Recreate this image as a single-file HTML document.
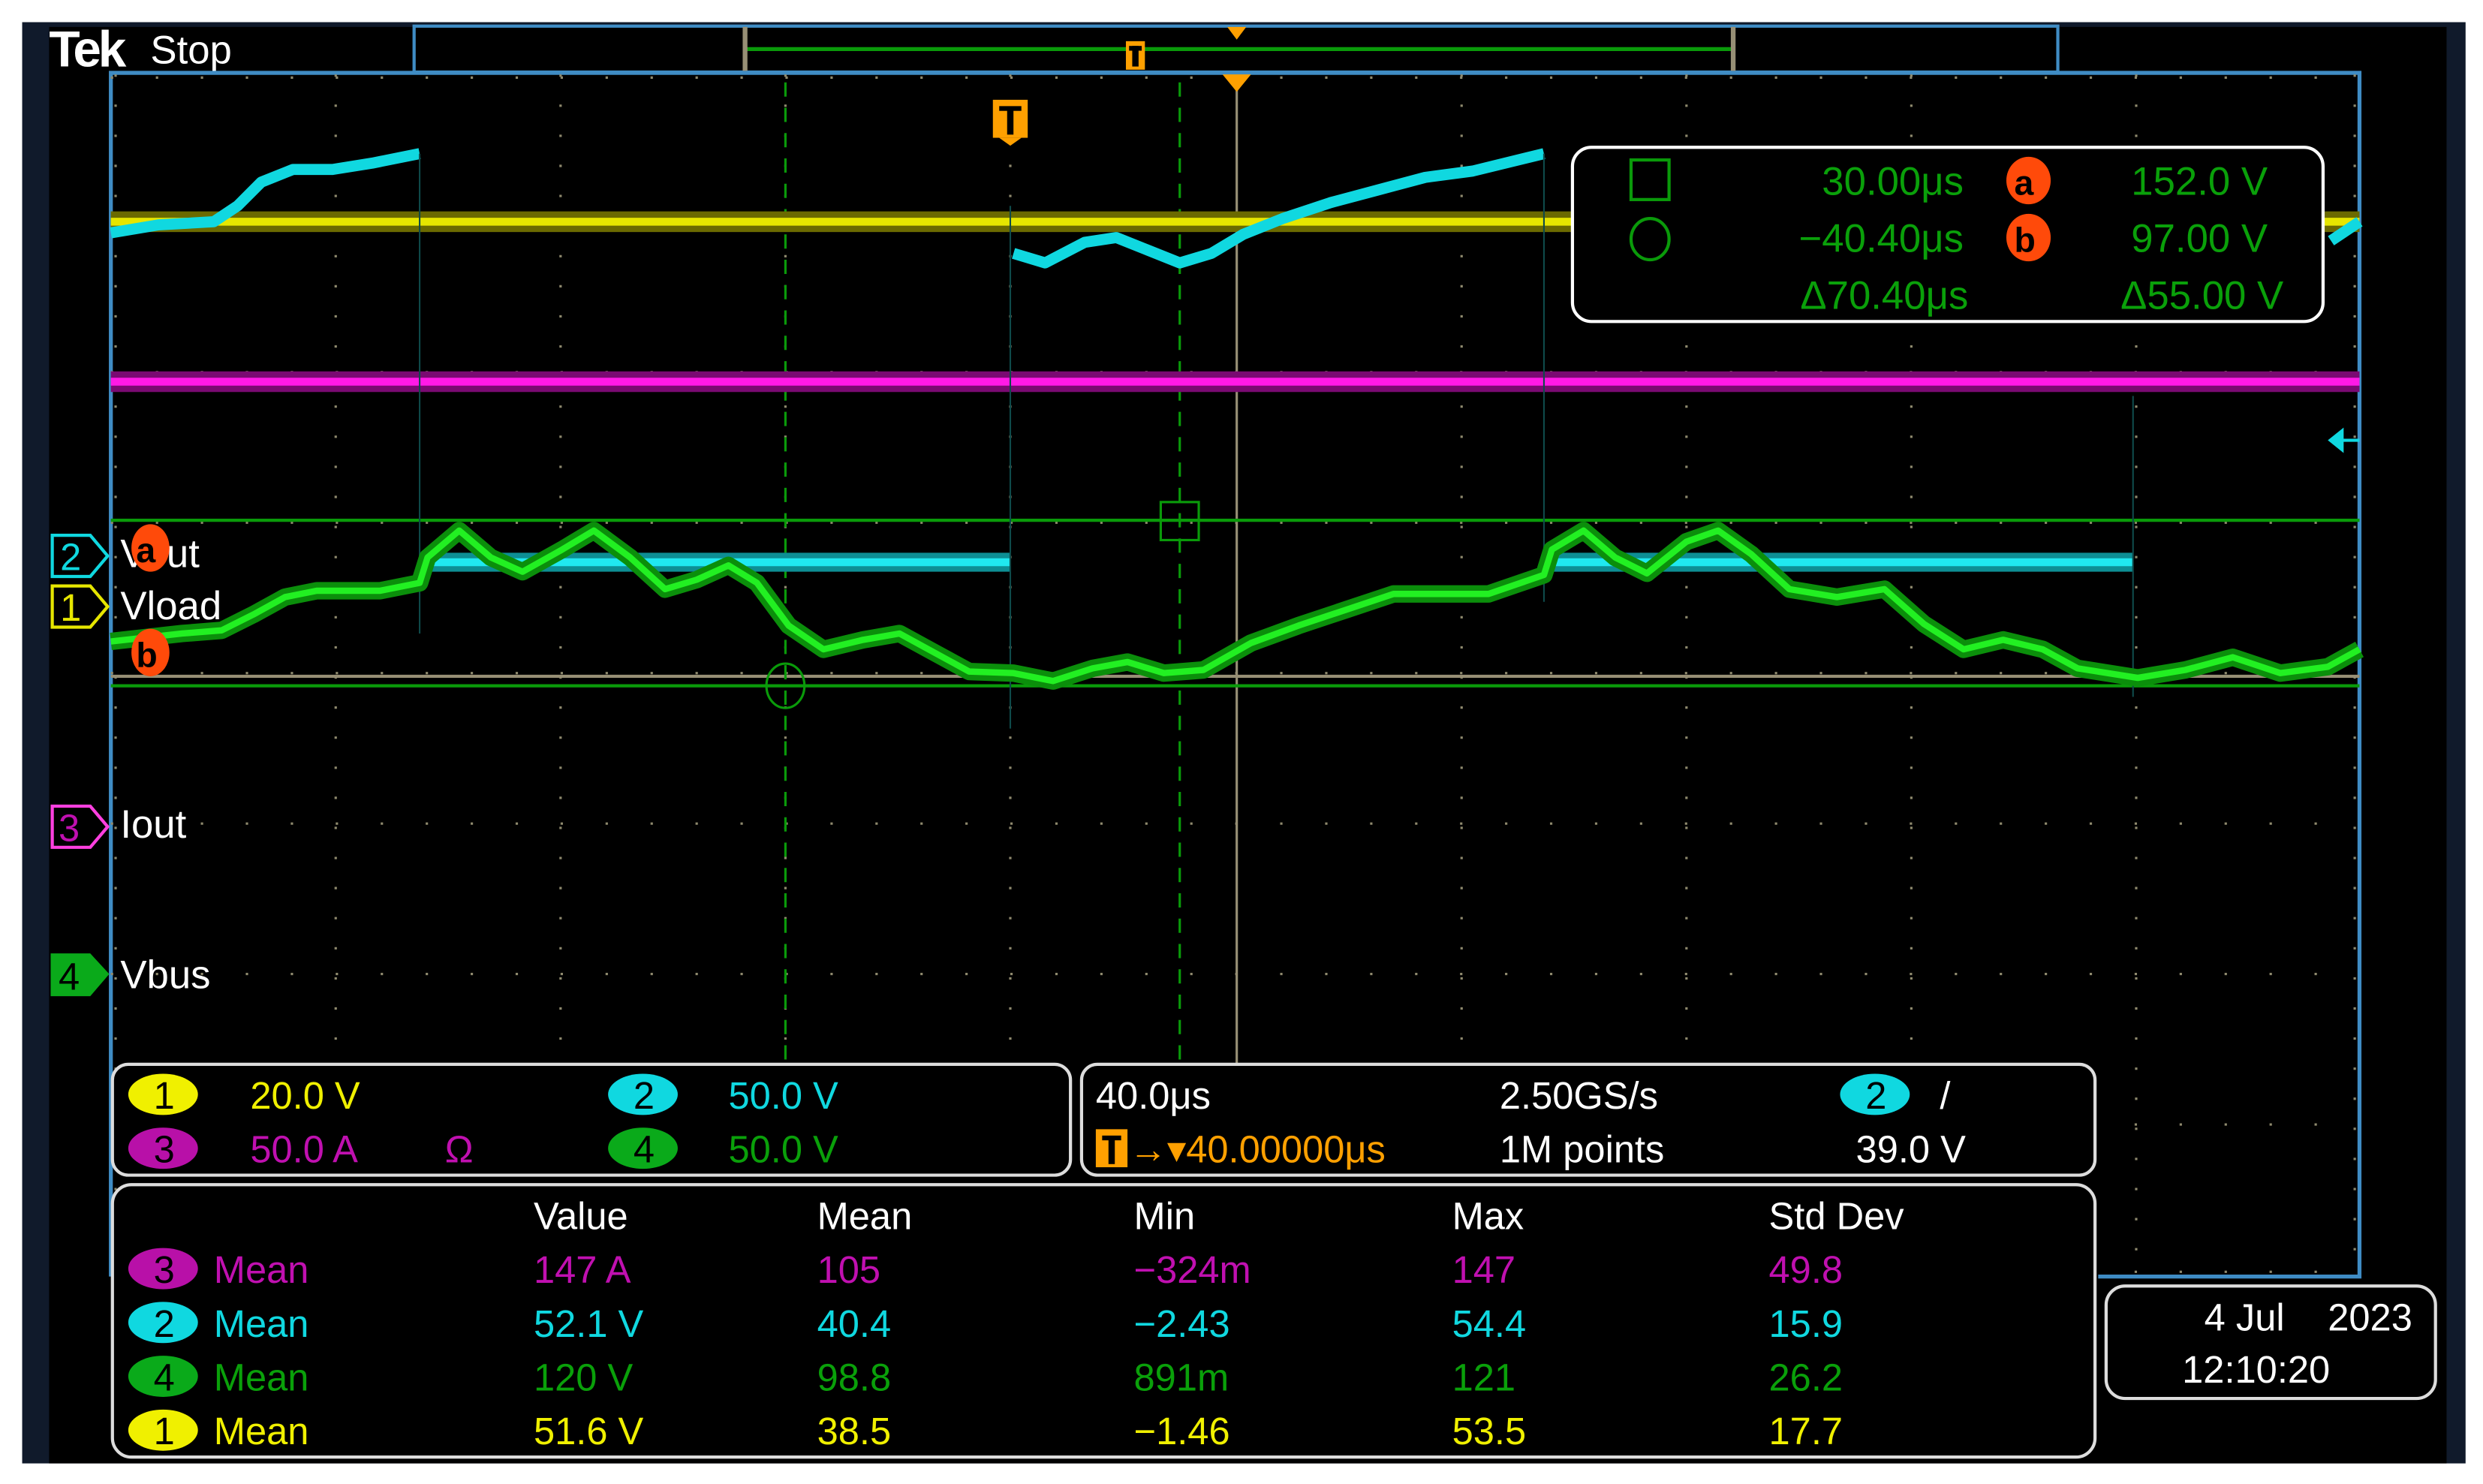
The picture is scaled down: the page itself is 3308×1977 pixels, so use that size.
<!DOCTYPE html>
<html><head><meta charset="utf-8"><style>
html,body{margin:0;padding:0;background:#fff;width:3308px;height:1977px;overflow:hidden}
svg{display:block}
text{font-family:"Liberation Sans Narrow","Liberation Sans",sans-serif}
</style></head><body>
<svg width="3308" height="1977" viewBox="0 0 1568 937" preserveAspectRatio="none" xmlns="http://www.w3.org/2000/svg">
<rect x="0" y="0" width="1568" height="937" fill="#fff"/>
<rect x="14" y="14" width="1543" height="910" fill="#101a2b"/>
<rect x="31" y="17" width="1514" height="907" fill="#000"/>
<!-- top bar -->
<text x="31" y="42" font-size="32" font-weight="bold" fill="#fff" font-family="Liberation Serif,serif" letter-spacing="-2">Tek</text>
<text x="95" y="40" font-size="25" fill="#fff">Stop</text>
<rect x="261.5" y="16.5" width="1038" height="29" fill="none" stroke="#3f8cc4" stroke-width="2"/>
<line x1="470" y1="31" x2="1094" y2="31" stroke="#0a9a0a" stroke-width="2.5"/>
<rect x="469" y="17" width="3" height="28" fill="#978f75"/>
<rect x="1093" y="17" width="3" height="28" fill="#978f75"/>
<rect x="711" y="26" width="12" height="18" fill="#ffa000"/><rect x="715" y="29" width="4" height="13" fill="#000"/><rect x="713" y="29" width="8" height="3" fill="#000"/>
<polygon points="775,17 787,17 781,25" fill="#ffa000"/>
<!-- graticule frame -->
<polyline points="70,806 70,46 1490,46 1490,806 1325,806" fill="none" stroke="#3f8cc4" stroke-width="2.5"/>
<!-- grid dots -->
<g stroke="#8f8a6e" stroke-width="1.5">
<g stroke-dasharray="1.5 17.5">
<line x1="212" y1="47" x2="212" y2="806"/><line x1="354" y1="47" x2="354" y2="806"/><line x1="496" y1="47" x2="496" y2="806"/><line x1="638" y1="47" x2="638" y2="806"/><line x1="923" y1="47" x2="923" y2="806"/><line x1="1065" y1="47" x2="1065" y2="806"/><line x1="1207" y1="47" x2="1207" y2="806"/><line x1="1349" y1="47" x2="1349" y2="806"/><line x1="73" y1="47" x2="73" y2="806"/><line x1="1487" y1="47" x2="1487" y2="806"/>
</g>
<g stroke-dasharray="1.5 26.9">
<line x1="70" y1="49" x2="1490" y2="49"/><line x1="70" y1="140" x2="1490" y2="140"/><line x1="70" y1="235" x2="1490" y2="235"/><line x1="70" y1="330" x2="1490" y2="330"/><line x1="70" y1="425" x2="1490" y2="425"/><line x1="70" y1="520" x2="1490" y2="520"/><line x1="70" y1="615" x2="1490" y2="615"/><line x1="70" y1="710" x2="1490" y2="710"/><line x1="70" y1="803" x2="1490" y2="803"/>
</g>
</g>
<line x1="70" y1="427" x2="1490" y2="427" stroke="#978f75" stroke-width="2"/>
<line x1="781" y1="52" x2="781" y2="672" stroke="#978f75" stroke-width="1.5"/>
<polygon points="772,47 790,47 781,58" fill="#ffa000"/>
<!-- cursors -->
<line x1="496" y1="52" x2="496" y2="670" stroke="#0a9a0a" stroke-width="1.5" stroke-dasharray="9 7"/>
<line x1="745" y1="52" x2="745" y2="670" stroke="#0a9a0a" stroke-width="1.5" stroke-dasharray="9 7"/>
<line x1="70" y1="328.5" x2="1490" y2="328.5" stroke="#0a9a0a" stroke-width="2"/>
<line x1="70" y1="433" x2="1490" y2="433" stroke="#0a9a0a" stroke-width="2"/>
<rect x="733" y="317" width="24" height="24" fill="none" stroke="#0a9a0a" stroke-width="1.5"/>
<ellipse cx="496" cy="433" rx="12" ry="14" fill="none" stroke="#0a9a0a" stroke-width="1.5"/>
<!-- T marker -->
<rect x="627" y="63" width="22" height="24" fill="#ffa000"/><polygon points="631,87 645,87 638,92" fill="#ffa000"/>
<rect x="631" y="67" width="14" height="3" fill="#000"/><rect x="636" y="69" width="4" height="16" fill="#000"/>
<!-- traces -->
<line x1="70" y1="140" x2="1490" y2="140" stroke="#6b6a00" stroke-width="13"/>
<line x1="70" y1="140" x2="1490" y2="140" stroke="#e6e600" stroke-width="5"/>
<line x1="70" y1="241" x2="1490" y2="241" stroke="#7a0a72" stroke-width="13"/>
<line x1="70" y1="241" x2="1490" y2="241" stroke="#ff1ae6" stroke-width="5"/>
<g fill="none" stroke="#10d8e0" stroke-width="7" stroke-linejoin="round">
<polyline points="70,147 100,142 135,140 150,130 165,115 185,107 210,107 235,103 265,97"/>
<polyline points="640,160 660,166 685,153 705,150 725,158 745,166 765,160 785,148 810,138 840,128 870,120 900,112 930,108 975,97"/>
<polyline points="1472,152 1490,140"/>
</g>
<g stroke="#0d8e94" stroke-width="12"><line x1="268" y1="355" x2="638" y2="355"/><line x1="975" y1="355" x2="1347" y2="355"/></g>
<g stroke="#20e8f0" stroke-width="5"><line x1="268" y1="355" x2="638" y2="355"/><line x1="975" y1="355" x2="1347" y2="355"/></g>
<g stroke="#0e4a4a" stroke-width="1"><line x1="265" y1="97" x2="265" y2="400"/><line x1="638" y1="130" x2="638" y2="460"/><line x1="975" y1="97" x2="975" y2="380"/><line x1="1347" y1="250" x2="1347" y2="440"/></g>
<polyline fill="none" stroke="#0b8e0b" stroke-width="11" stroke-linejoin="round" points="70,405 115,400 140,398 160,388 180,377 200,373 240,373 265,368 270,352 290,335 310,352 330,361 355,347 375,335 398,352 420,372 440,366 460,357 478,368 498,395 520,410 545,404 568,400 590,412 612,424 640,425 665,430 690,422 712,418 735,425 760,423 790,406 820,395 850,385 880,375 940,375 975,363 980,347 1000,335 1020,352 1040,362 1065,342 1085,335 1106,350 1130,372 1160,377 1190,372 1215,394 1240,410 1265,404 1290,410 1312,422 1350,428 1380,423 1410,415 1440,425 1470,421 1490,410"/>
<polyline fill="none" stroke="#22f022" stroke-width="4" stroke-linejoin="round" points="70,405 115,400 140,398 160,388 180,377 200,373 240,373 265,368 270,352 290,335 310,352 330,361 355,347 375,335 398,352 420,372 440,366 460,357 478,368 498,395 520,410 545,404 568,400 590,412 612,424 640,425 665,430 690,422 712,418 735,425 760,423 790,406 820,395 850,385 880,375 940,375 975,363 980,347 1000,335 1020,352 1040,362 1065,342 1085,335 1106,350 1130,372 1160,377 1190,372 1215,394 1240,410 1265,404 1290,410 1312,422 1350,428 1380,423 1410,415 1440,425 1470,421 1490,410"/>
<polygon points="1470,278 1480,270 1480,286" fill="#10d8e0"/><line x1="1478" y1="278" x2="1490" y2="278" stroke="#10d8e0" stroke-width="2"/>
<!-- channel labels -->
<g stroke-width="2" fill="none">
<polygon points="33,338 57,338 68,351 57,364 33,364" stroke="#10d8e0"/>
<polygon points="33,370 57,370 68,383 57,396 33,396" stroke="#e6e600"/>
<polygon points="33,509 57,509 68,522 57,535 33,535" stroke="#ff40e0"/>
</g>
<polygon points="32,602 57,602 69,615 57,629 32,629" fill="#0aaa1a"/>
<g font-size="24" fill="#10d8e0"><text x="38" y="360">2</text></g>
<g font-size="24" fill="#e6e600"><text x="38" y="392">1</text></g>
<g font-size="24" fill="#c010b0"><text x="37" y="531">3</text></g>
<g font-size="24" fill="#000"><text x="37" y="625">4</text></g>
<g font-size="25" fill="#fff"><text x="76" y="358">Vout</text><text x="76" y="391">Vload</text><text x="76" y="529">Iout</text><text x="76" y="624">Vbus</text></g>
<ellipse cx="95" cy="346" rx="12" ry="15" fill="#ff4a0a"/><text x="86" y="355" font-size="22" fill="#000" font-weight="bold">a</text>
<ellipse cx="95" cy="412" rx="12" ry="15" fill="#ff4a0a"/><text x="86" y="421" font-size="22" fill="#000" font-weight="bold">b</text>
<!-- cursor readout -->
<rect x="993" y="93" width="474" height="110" rx="12" fill="#000" stroke="#fff" stroke-width="2"/>
<rect x="1030" y="101" width="24" height="25" fill="none" stroke="#0a9a0a" stroke-width="2"/>
<ellipse cx="1042" cy="151" rx="12" ry="13" fill="none" stroke="#0a9a0a" stroke-width="2"/>
<g font-size="25" fill="#0aa00a" text-anchor="end"><text x="1240" y="123">30.00μs</text><text x="1240" y="159">−40.40μs</text><text x="1243" y="195">Δ70.40μs</text><text x="1432" y="123">152.0 V</text><text x="1432" y="159">97.00 V</text><text x="1442" y="195">Δ55.00 V</text></g>
<ellipse cx="1281" cy="114" rx="14" ry="15" fill="#ff4a0a"/><text x="1272" y="123" font-size="22" fill="#000" font-weight="bold">a</text>
<ellipse cx="1281" cy="150" rx="14" ry="15" fill="#ff4a0a"/><text x="1272" y="159" font-size="22" fill="#000" font-weight="bold">b</text>
<!-- bottom boxes -->
<g fill="#000" stroke="#ddd" stroke-width="2">
<rect x="71" y="672" width="605" height="70" rx="10"/>
<rect x="683" y="672" width="640" height="70" rx="10"/>
<rect x="71" y="748" width="1252" height="172" rx="12"/>
<rect x="1330" y="812" width="208" height="71" rx="12"/>
</g>
<g font-size="24">
<ellipse cx="103" cy="691" rx="22" ry="13" fill="#f0f000"/><text x="97" y="700" fill="#000">1</text>
<ellipse cx="103" cy="725" rx="22" ry="13" fill="#b810a8"/><text x="97" y="734" fill="#000">3</text>
<ellipse cx="406" cy="691" rx="22" ry="13" fill="#10d8e0"/><text x="400" y="700" fill="#000">2</text>
<ellipse cx="406" cy="725" rx="22" ry="13" fill="#0aaa1a"/><text x="400" y="734" fill="#000">4</text>
<text x="158" y="700" fill="#f0f000">20.0 V</text>
<text x="158" y="734" fill="#c010b0">50.0 A</text><text x="281" y="734" fill="#c010b0">Ω</text>
<text x="460" y="700" fill="#10d8e0">50.0 V</text>
<text x="460" y="734" fill="#0aa00a">50.0 V</text>
<text x="692" y="700" fill="#fff">40.0μs</text>
<text x="947" y="700" fill="#fff">2.50GS/s</text>
<ellipse cx="1184" cy="691" rx="22" ry="13" fill="#10d8e0"/><text x="1178" y="700" fill="#000">2</text>
<text x="1225" y="700" fill="#fff">/</text>
<rect x="692" y="713" width="20" height="24" fill="#ffa000"/><rect x="696" y="717" width="12" height="3" fill="#000"/><rect x="700" y="719" width="4" height="16" fill="#000"/>
<text x="713" y="734" fill="#ffa000">→▾40.00000μs</text>
<text x="947" y="734" fill="#fff">1M points</text>
<text x="1172" y="734" fill="#fff">39.0 V</text>
</g>
<g font-size="24" fill="#fff"><text x="337" y="776">Value</text><text x="516" y="776">Mean</text><text x="716" y="776">Min</text><text x="917" y="776">Max</text><text x="1117" y="776">Std Dev</text></g>
<g font-size="24">
<ellipse cx="103" cy="801" rx="22" ry="13" fill="#b810a8"/><text x="97" y="810" fill="#000">3</text>
<ellipse cx="103" cy="835" rx="22" ry="13" fill="#10d8e0"/><text x="97" y="844" fill="#000">2</text>
<ellipse cx="103" cy="869" rx="22" ry="13" fill="#0aaa1a"/><text x="97" y="878" fill="#000">4</text>
<ellipse cx="103" cy="903" rx="22" ry="13" fill="#f0f000"/><text x="97" y="912" fill="#000">1</text>
<g fill="#c010b0"><text x="135" y="810">Mean</text><text x="337" y="810">147 A</text><text x="516" y="810">105</text><text x="716" y="810">−324m</text><text x="917" y="810">147</text><text x="1117" y="810">49.8</text></g>
<g fill="#10d8e0"><text x="135" y="844">Mean</text><text x="337" y="844">52.1 V</text><text x="516" y="844">40.4</text><text x="716" y="844">−2.43</text><text x="917" y="844">54.4</text><text x="1117" y="844">15.9</text></g>
<g fill="#0aa00a"><text x="135" y="878">Mean</text><text x="337" y="878">120 V</text><text x="516" y="878">98.8</text><text x="716" y="878">891m</text><text x="917" y="878">121</text><text x="1117" y="878">26.2</text></g>
<g fill="#f0f000"><text x="135" y="912">Mean</text><text x="337" y="912">51.6 V</text><text x="516" y="912">38.5</text><text x="716" y="912">−1.46</text><text x="917" y="912">53.5</text><text x="1117" y="912">17.7</text></g>
</g>
<g font-size="24" fill="#fff"><text x="1392" y="840">4 Jul</text><text x="1470" y="840">2023</text><text x="1378" y="873">12:10:20</text></g>
</svg>
</body></html>
